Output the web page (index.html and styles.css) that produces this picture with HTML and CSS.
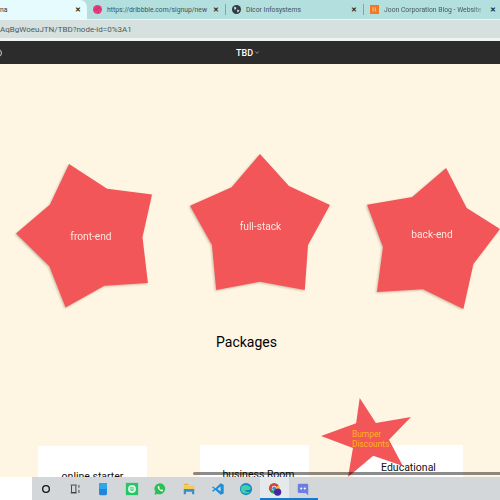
FILE: index.html
```html
<!DOCTYPE html>
<html lang="en">
<head>
<meta charset="utf-8">
<title>TBD</title>
<link rel="stylesheet" href="styles.css">
</head>
<body>
<div class="screen">
  <div class="tabs">
    <div class="tab tab-active"><span class="tab-title">na</span><span class="close">✕</span></div>
    <div class="tab tab-dribbble">
      <svg class="fav" viewBox="0 0 12 12"><circle cx="6" cy="6" r="6" fill="#e83e7f"/><path d="M2 3.500c3 2 5 5 6 7M1.500 7c3-1 6-2 8-5M4 1.500c2 2 5 4 7 4.500" fill="none" stroke="#a91f55" stroke-width=".6"/></svg>
      <span class="tab-title">https://dribbble.com/signup/new</span><span class="close">✕</span>
    </div>
    <div class="tab tab-dicor">
      <svg class="fav" viewBox="0 0 12 12"><circle cx="6" cy="6" r="6" fill="#2f3c44"/><path d="M3 2l3 1.500-1 2.500-2 0zM7 6l3 1-2 3-1-1z" fill="#cfe5e5"/></svg>
      <span class="tab-title">Dicor Infosystems</span><span class="close">✕</span>
    </div>
    <div class="tab tab-joon">
      <svg class="fav" viewBox="0 0 12 12"><rect width="12" height="12" fill="#ee7a28"/><path d="M4 3v6M7 3v5l1 1" stroke="#ffd9a8" fill="none"/></svg>
      <span class="tab-title tab-fade">Joon Corporation Blog - Website</span><span class="close">✕</span>
    </div>
  </div>
  <div class="address">AqBgWoeuJTN/TBD?node-id=0%3A1</div>
  <div class="toolbar"><span class="edge-ring"></span><span class="doc-title">TBD</span><svg class="chev" viewBox="0 0 6 4"><path d="M.5.800 3 3.200 5.500.800" fill="none" stroke="#e4e4e4" stroke-width=".9"/></svg></div>
  <main class="canvas">
    <div class="star star-a"><span class="star-label">front-end</span></div>
    <div class="star star-b"><span class="star-label">full-stack</span></div>
    <div class="star star-c"><span class="star-label">back-end</span></div>
    <h2 class="heading">Packages</h2>
    <div class="card card-a">online starter</div>
    <div class="card card-b">business Room</div>
    <div class="card card-c">Educational</div>
    <div class="promo"><span class="promo-shape"></span><span class="promo-label">Bumper<br>Discounts</span></div>
    <div class="scroll-thumb"></div>
  </main>
  <div class="taskbar">
    <div class="search"></div>
    <div class="task-icons">
      <span class="slot"><svg viewBox="0 0 16 16"><circle cx="8" cy="8" r="3.800" fill="none" stroke="#111" stroke-width="1.500"/></svg></span>
      <span class="slot"><svg viewBox="0 0 16 16"><path d="M3 3.500h7M3 12.500h7M4 4v8h5V4M12.500 3.500v3M12.500 9v3.500" fill="none" stroke="#333" stroke-width="1"/></svg></span>
      <span class="slot"><svg viewBox="0 0 16 16"><rect x="3.500" y="1" width="9" height="14" rx="1.500" fill="#1f86d8"/><rect x="3.500" y="1" width="9" height="7" rx="1.500" fill="#2fa5ea"/></svg></span>
      <span class="slot"><svg viewBox="0 0 16 16"><rect x="1" y="1" width="14" height="14" fill="#23c765"/><circle cx="8" cy="8" r="4.500" fill="#d8f7e4"/><path d="M5.500 6.800c2-.6 3.500-.4 5 .4M5.800 8.300c1.700-.4 3-.3 4.300.4M6.200 9.700c1.300-.3 2.400-.2 3.400.3" stroke="#23a85a" stroke-width=".7" fill="none"/></svg></span>
      <span class="slot"><svg viewBox="0 0 16 16"><path d="M8 1.500a6.300 6.300 0 0 0-5.400 9.600L1.700 14.500l3.500-.9A6.300 6.300 0 1 0 8 1.500z" fill="#28c253"/><path d="M5.800 4.800c-1 1 0 3 1.400 4.300s3 2.300 4.100 1.300l.2-1.200-1.500-.8-.7.700c-1-.4-1.800-1.200-2.300-2.200l.6-.7-.7-1.500z" fill="#fff"/></svg></span>
      <span class="slot"><svg viewBox="0 0 16 16"><path d="M2 2h5l1 1.500H2z" fill="#e8b23a"/><path d="M2 4h12v4H2z" fill="#f4cb5a"/><path d="M2 8h12v6h-2.500v-3h-7v3H2z" fill="#3b8fc4"/></svg></span>
      <span class="slot"><svg viewBox="0 0 16 16"><path d="M11 1.500 14.500 3v10L11 14.500 5 9l-2.500 2L1 10l3-2-3-2 1.500-1L5 7z" fill="#1b8fd8"/><path d="M11 5.200v5.600L7.300 8z" fill="#d3d6d8"/></svg></span>
      <span class="slot"><svg viewBox="0 0 16 16"><circle cx="8" cy="8" r="7" fill="#1a86c9"/><path d="M2 7c1-4 8-5 11-1 1 2 0 3-2 3H7c0 2 3 3 6 2-2 3-8 3-10 0-.6-1-1-2-1-4z" fill="#3fd0a5"/></svg></span>
      <span class="slot slot-chrome"><svg viewBox="0 0 16 16"><circle cx="7" cy="7" r="6" fill="#d64437"/><path d="M7 7 1.800 10a6 6 0 0 0 7 2.700z" fill="#2aa44f"/><path d="M7 7l5.200-3A6 6 0 0 1 9 12.700z" fill="#f6c026"/><circle cx="7" cy="7" r="2.600" fill="#fff"/><circle cx="7" cy="7" r="2" fill="#3d7fe6"/><circle cx="11" cy="11.500" r="4.200" fill="#4527a0"/></svg></span>
      <span class="slot slot-discord"><svg viewBox="0 0 16 16"><path d="M3.500 2h9A1.500 1.500 0 0 1 14 3.500V15l-3-2.500H3.500A1.500 1.500 0 0 1 2 11V3.500A1.500 1.500 0 0 1 3.500 2z" fill="#6c7fe0"/><circle cx="6" cy="7.500" r="1.200" fill="#fff"/><circle cx="10" cy="7.500" r="1.200" fill="#fff"/></svg></span>
    </div>
  </div>
</div>
</body>
</html>
```
FILE: styles.css
```css
* { box-sizing: border-box; }
html, body { margin: 0; padding: 0; }
body { width: 500px; height: 500px; overflow: hidden; font-family: Roboto, "Liberation Sans", sans-serif; }
.screen { width: 500px; height: 500px; display: flex; flex-direction: column; overflow: hidden; background: #fff5e3; }

.tabs { height: 20px; flex: none; display: flex; background: #b3dfdf; border-bottom: 1px solid #e4f6f6; }
.tab { height: 19px; display: flex; align-items: center; font-size: 6.800px; color: #3f5256; position: relative; white-space: nowrap; }
.tab-title { flex: 1; overflow: hidden; }
.tab-active { width: 87px; padding-right: 5.500px; background: #e5fbfd; border-radius: 0 7px 0 0; height: 20px; margin-bottom: -1px; color: #333; }
.tab-dribbble { width: 138px; padding: 0 5px 0 6px; }
.tab-dicor { width: 138px; padding: 0 5px 0 7px; }
.tab-joon { width: 137px; padding: 0 3px 0 7px; }
.tab-dicor::before, .tab-joon::before { content: ""; position: absolute; left: 0; top: 4px; width: 1px; height: 11px; background: #7fa6a8; }
.tab-fade { color: #46595c; mask-image: linear-gradient(90deg, #000 88%, transparent 100%); }
.fav { width: 9px; height: 9px; flex: none; margin-right: 5px; }
.close { flex: none; font-size: 7px; font-weight: 700; color: #1d2b30; margin-left: 3px; width: 8px; text-align: center; }

.address { height: 18px; flex: none; background: #d6e1df; font-size: 8px; line-height: 19px; color: #4b5a5c; white-space: nowrap; }

.toolbar { height: 26px; flex: none; position: relative; overflow: hidden; background: #2c2c2c; border-top: 3px solid #f0f4f3; display: flex; align-items: center; justify-content: center; gap: 2px; color: #fff; font-size: 9px; padding-right: 5px; }
.edge-ring { position: absolute; left: -6px; top: 8px; width: 8px; height: 8px; border: 1px solid #cfcfcf; border-radius: 50%; }
.doc-title { font-weight: 500; }
.chev { width: 4px; height: 3px; }

.canvas { position: relative; flex: 1; background: #fff5e3; }

.star { position: absolute; display: flex; align-items: center; justify-content: center; color: #ffe6dc; filter: drop-shadow(-0.5px 1.500px 1px rgba(110, 80, 50, .35)); }
.star::before { content: ""; position: absolute; inset: 0; background: #f25658; }
.star-label { font-size: 10.200px; position: relative; }
.star-a { left: 16px; top: 100px; width: 136px; height: 145px; padding: 0 0 0 14px; }
.star-a::before { clip-path: polygon(39% 0%, 67% 17%, 100% 21%, 93% 50.500%, 97% 82%, 65% 84%, 36.500% 99%, 24.500% 70.500%, 0% 48%, 25% 28%); }
.star-b { left: 190px; top: 90px; width: 140px; height: 136px; padding: 9px 0 0 1px; }
.star-b::before { clip-path: polygon(50% 0%, 70.700% 23.500%, 100% 37.500%, 84.300% 67%, 82% 100%, 50% 94%, 18.700% 100%, 15.700% 67%, 0% 38%, 29.700% 24.500%); }
.star-c { left: 367px; top: 104px; width: 133px; height: 141px; padding: 0 3px 9px 0; }
.star-c::before { clip-path: polygon(59.500% 0%, 75% 28.400%, 100% 43.300%, 80% 68%, 72.500% 100%, 42.100% 86%, 7.500% 88%, 12% 56%, 0% 26%, 34% 20.500%); }

.heading { position: absolute; left: 0; top: 268px; width: 493px; margin: 0; text-align: center; font-size: 14px; line-height: 20px; font-weight: 400; color: #000; }

.card { position: absolute; top: 382px; width: 109px; height: 60px; background: #fff; font-size: 10.500px; color: #111; text-align: center; padding-top: 24px; }
.card-a { left: 38px; }
.card-b { left: 200px; top: 381px; padding: 23px 0 0 8px; }
.card-c { left: 354px; top: 381px; padding-top: 16px; }

.promo { position: absolute; left: 321px; top: 334px; width: 90px; height: 79px; }
.promo-shape { position: absolute; inset: 0; background: #f25658; clip-path: polygon(43% 0%, 61% 31.500%, 100% 24%, 75.500% 53%, 91% 86%, 58% 73%, 30% 100%, 35.500% 63.300%, 0% 48%, 39% 32%); }
.promo-label { position: absolute; left: 31px; top: 31px; font-size: 8.400px; line-height: 10px; color: #ffb31a; white-space: nowrap; }

.scroll-thumb { position: absolute; left: 193px; right: 0; top: 408px; height: 3px; background: rgba(0, 0, 0, .45); border-radius: 2px 0 0 2px; }

.taskbar { height: 23px; flex: none; display: flex; background: #d3d7da; position: relative; }
.search { width: 31.700px; background: #fff; }
.task-icons { display: flex; align-items: center; }
.slot { width: 28.600px; height: 23px; display: flex; align-items: center; justify-content: center; }
.slot svg { width: 14px; height: 14px; }
.slot-chrome { background: #e6e9ec; box-shadow: inset 0 -2px 0 #1c78c8; }
.slot-discord { box-shadow: inset 0 -2px 0 #1c78c8; }
```
